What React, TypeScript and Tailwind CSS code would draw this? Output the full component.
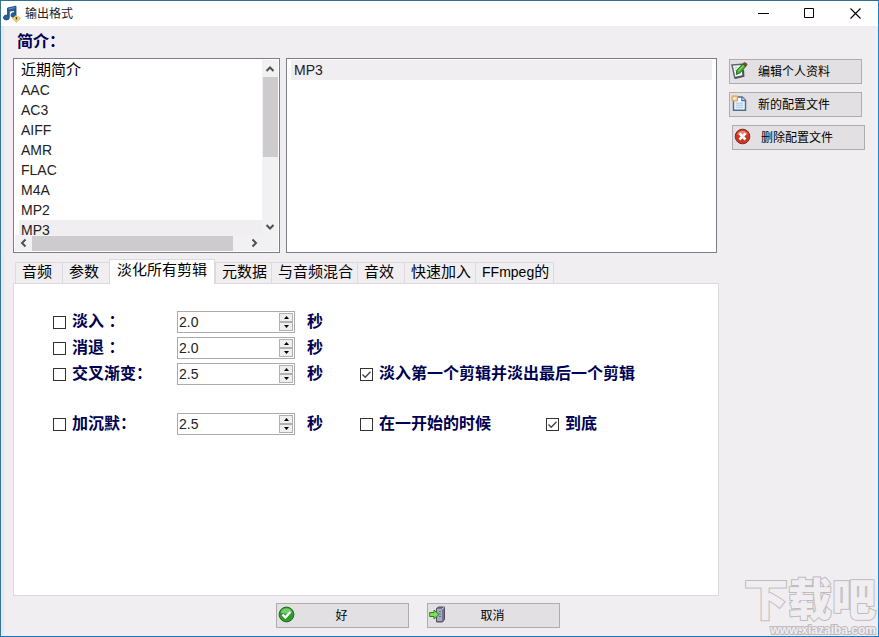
import React, { useState } from 'react';

const FORMATS = ['近期简介', 'AAC', 'AC3', 'AIFF', 'AMR', 'FLAC', 'M4A', 'MP2', 'MP3'];
const TABS = ['音频', '参数', '淡化所有剪辑', '元数据', '与音频混合', '音效', '快速加入', 'FFmpeg的'];

const MusicIcon = () => (
    <svg width="18" height="18" viewBox="0 0 18 18" aria-hidden="true">
        <path d="M4.500 3 13 1.200V10a2.500 2.300 0 1 1-1.700-2.100V5.200l-5 1.100v6.200a2.900 2.400 0 1 1-1.800-2.200z" fill="#22609e" stroke="#18406c" strokeWidth=".8" />
        <path d="M5.500 4 12.200 2.600" stroke="#5b97d0" strokeWidth="1" />
        <path d="m13.300 10.200 4.200 3.200-4.200 4-4-4z" fill="#ecd87c" stroke="#c9b05c" strokeWidth=".7" />
        <path d="M13.400 12v2.600" stroke="#5e4e1e" strokeWidth="1.400" />
    </svg>
);

const EditIcon = () => (
    <svg width="17" height="17" viewBox="0 0 17 17" aria-hidden="true">
        <path d="m1 3 9.500-.8 1.800 11.600-8.500 2z" fill="#f4f7f6" stroke="#5c666e" strokeWidth="1.500" />
        <path d="m12.300 8 .3 6.200-8.600 1.900" fill="none" stroke="#4b545b" strokeWidth="1.600" />
        <path d="m3.500 6 3-.3M4 8.300l2-.2" stroke="#b3bac2" strokeWidth="1" />
        <path d="m5.300 12.500.5-4.200L11.800 1.800l3 2.600-6 6.700z" fill="#43b32c" stroke="#256b1a" strokeWidth="1" />
        <path d="M7.500 9 13 3.200" stroke="#a2e58a" strokeWidth="1" />
        <path d="m11.700 2 1.400-1.300q2-.4 3 1.700l-1.300 2z" fill="#8c4a3c" stroke="#5b2a22" strokeWidth=".7" />
    </svg>
);

const NewIcon = () => (
    <svg width="17" height="17" viewBox="0 0 17 17" aria-hidden="true">
        <path d="M2.500 2h8.700l3.300 3.300v10H2.500z" fill="#f6faff" stroke="#4c6c94" strokeWidth="1.500" />
        <path d="M10.800 2v3.600h3.700" fill="#c6daf0" stroke="#4c6c94" strokeWidth="1.100" />
        <path d="M4.700 7.500h7.600v5.800H4.700z" fill="#b5d0ef" />
        <path d="M4.700 9.300h7.600M4.700 11.500h7.600" stroke="#e2eefb" strokeWidth=".8" />
        <path d="M1 1h5.500v5H1z" fill="#f5c894" stroke="#de9c55" strokeWidth="1" />
        <path d="M3.700 2v3M2.200 3.500h3" stroke="#fff5dd" strokeWidth="1" />
    </svg>
);

const DeleteIcon = () => (
    <svg width="17" height="17" viewBox="0 0 17 17" aria-hidden="true">
        <circle cx="8.500" cy="8.500" r="7.300" fill="#cc3424" stroke="#84261e" strokeWidth="1" />
        <path d="M3 6.300a6 6 0 0 1 11 0q-5.500 2-11 0z" fill="#e98272" />
        <path d="m5.500 5.500 6 6m0-6-6 6" stroke="#fff" strokeWidth="2.500" />
    </svg>
);

const OkIcon = () => (
    <svg width="17" height="17" viewBox="0 0 17 17" aria-hidden="true">
        <circle cx="8.500" cy="8.500" r="7.400" fill="#2f9a2c" stroke="#1f6b20" strokeWidth="1" />
        <path d="M2.800 6.500a6 6 0 0 1 11.400 0q-5.700 2.500-11.400 0z" fill="#79c970" />
        <path d="m4.500 8.500 2.800 3 5-5.500" fill="none" stroke="#fff" strokeWidth="2.400" />
    </svg>
);

const CancelIcon = () => (
    <svg width="17" height="17" viewBox="0 0 17 17" aria-hidden="true">
        <path d="M7.500 2.500 9.500 1h6v12.500L13.500 16h-6z" fill="#73738c" stroke="#4d4d63" strokeWidth="1" />
        <path d="M8 3h5v12H8z" fill="#a9a9bf" />
        <path d="M13 3 15.300 1.300" stroke="#d5d5e2" strokeWidth="1" />
        <path d="M10 5.500h2M10 8h2M10 10.500h2" stroke="#6e6e86" strokeWidth="1" />
        <path d="M.700 6.500H5V4l5 4.500L5 13v-2.500H.700z" fill="#7be05a" stroke="#2c7f1f" strokeWidth="1" />
    </svg>
);

interface ChevronProps {
    d: string;
}

const Chevron: React.FC<ChevronProps> = ({ d }) => (
    <svg width="10" height="10" viewBox="0 0 10 10" aria-hidden="true">
        <path d={d} fill="none" stroke="#505050" strokeWidth="2" />
    </svg>
);

interface ActionButtonProps {
    icon: React.ReactNode;
    label: string;
    centered?: boolean;
    onClick?: () => void;
}

const ActionButton: React.FC<ActionButtonProps> = ({ icon, label, centered, onClick }) => (
    <button
        type="button"
        onClick={onClick}
        className="flex h-[25px] w-[133px] shrink-0 items-center border border-[#adadad] bg-[#e2e0e2] pl-px text-xs text-black hover:bg-[#e5f1fb]"
    >
        <span className="pb-[2px]">{icon}</span>
        <span className={centered ? 'flex-1 pr-5 text-center' : 'pl-[10px]'}>{label}</span>
    </button>
);

interface CheckFieldProps {
    label: string;
    defaultChecked?: boolean;
    className?: string;
}

const CheckField: React.FC<CheckFieldProps> = ({ label, defaultChecked, className }) => (
    <label className={`flex items-center whitespace-pre text-base font-bold text-[#000050] ${className ?? ''}`}>
        <span className="relative mr-[6px] size-[13px]">
            <input type="checkbox" defaultChecked={defaultChecked} className="peer block size-[13px] appearance-none border border-[#333] bg-white" />
            <svg className="pointer-events-none absolute inset-0 hidden peer-checked:block" width="13" height="13" viewBox="0 0 13 13" aria-hidden="true">
                <path d="m2.500 6.500 2.700 2.800 5.300-5.600" fill="none" stroke="#444" strokeWidth="1.300" />
            </svg>
        </span>
        {label}
    </label>
);

interface SpinRowProps {
    label: string;
    initial: number;
    children?: React.ReactNode;
}

const SpinRow: React.FC<SpinRowProps> = ({ label, initial, children }) => {
    const [value, setValue] = useState(initial.toFixed(1));
    const step = (delta: number) => setValue((v) => Math.max(0, (parseFloat(v) || 0) + delta).toFixed(1));

    return (
        <div className="flex h-[22px] items-center">
            <CheckField label={label} className="w-[124px]" />
            <div className="flex h-[22px] w-[118px] items-center border border-[#ababab] bg-white pr-px">
                <input
                    type="text"
                    aria-label={label}
                    value={value}
                    onChange={(e) => setValue(e.target.value)}
                    className="min-w-0 flex-1 pl-px text-sm text-[#222] outline-none"
                />
                <div className="flex flex-col">
                    <button type="button" aria-label="增加" onClick={() => step(0.1)} className="flex h-[9px] w-[14px] items-center justify-center border border-[#b0b0b0] bg-[#efefef]">
                        <svg width="5" height="3" viewBox="0 0 5 3"><path d="M0 3h5L2.500 0z" fill="#000" /></svg>
                    </button>
                    <button type="button" aria-label="减少" onClick={() => step(-0.1)} className="flex h-[9px] w-[14px] items-center justify-center border border-[#b0b0b0] bg-[#efefef]">
                        <svg width="5" height="3" viewBox="0 0 5 3"><path d="M0 0h5L2.500 3z" fill="#000" /></svg>
                    </button>
                </div>
            </div>
            <span className="ml-3 w-[53px] text-base font-bold text-[#000050]">秒</span>
            {children}
        </div>
    );
};

const App: React.FC = () => {
    const [format, setFormat] = useState('MP3');
    const [tab, setTab] = useState('淡化所有剪辑');

    return (
        <div className="relative flex min-h-screen flex-col overflow-hidden border border-t-[#2d7291] border-r-[#1883d7] border-b-[#2272b0] border-l-[#3b7390] bg-[#f0eef1] font-['Liberation_Sans','Noto_Sans_CJK_SC',sans-serif]">
            {/* Title bar */}
            <header className="flex h-[25px] items-center bg-white pl-[2px]">
                <MusicIcon />
                <h1 className="ml-1 flex-1 text-xs text-[#222]">输出格式</h1>
                <button type="button" aria-label="最小化" className="flex h-full w-[46px] items-center justify-center">
                    <svg width="11" height="11" viewBox="0 0 11 11"><path d="M0 5.500h11" stroke="#000" /></svg>
                </button>
                <button type="button" aria-label="最大化" className="flex h-full w-[46px] items-center justify-center">
                    <svg width="11" height="11" viewBox="0 0 11 11"><path d="M.5.5h9v9h-9z" fill="none" stroke="#000" /></svg>
                </button>
                <button type="button" aria-label="关闭" className="flex h-full w-[46px] items-center justify-center">
                    <svg width="11" height="11" viewBox="0 0 11 11"><path d="m.5.500 10 10m0-10-10 10" stroke="#000" strokeWidth="1.100" /></svg>
                </button>
            </header>

            <div className="flex flex-1 flex-col border-l-3 border-[#dcebf7] pr-[13px] pl-[9px]">
                <h2 className="h-8 pl-1 text-base leading-8 font-bold text-[#000050]">简介：</h2>

                <div className="flex flex-1 gap-[10px]">
                    <main className="flex min-w-0 flex-1 flex-col">
                        <div className="flex h-[195px] gap-[6px] pr-[2px]">
                            {/* Format list */}
                            <div className="flex w-[267px] flex-col border border-[#7c7e86] bg-white p-px">
                                <div className="flex min-h-0 flex-1">
                                    <ul role="listbox" aria-label="简介" className="flex-1 overflow-hidden pl-1 text-sm text-[#222]">
                                        {FORMATS.map((f) => (
                                            <li
                                                key={f}
                                                role="option"
                                                aria-selected={f === format}
                                                onClick={() => setFormat(f)}
                                                className={`h-5 pl-[2px] leading-5 ${f === '近期简介' ? 'text-[15px] text-black' : ''} ${f === format ? 'bg-[#f0eef1]' : ''}`}
                                            >
                                                {f}
                                            </li>
                                        ))}
                                    </ul>
                                    <div className="flex w-4 flex-col items-center bg-[#f1f0f2]">
                                        <button type="button" aria-label="向上滚动" className="flex h-[17px] items-center"><Chevron d="M1.500 7 5 3.500 8.500 7" /></button>
                                        <div className="h-20 w-[15px] bg-[#cdcbce]" />
                                        <button type="button" aria-label="向下滚动" className="mt-auto flex h-[17px] items-center"><Chevron d="M1.500 3 5 6.500 8.500 3" /></button>
                                    </div>
                                </div>
                                <div className="flex h-4 items-center bg-[#f1f0f2] pr-4">
                                    <button type="button" aria-label="向左滚动" className="flex w-[17px] justify-center"><Chevron d="M6.500 1.500 3 5l3.500 3.500" /></button>
                                    <div className="h-[15px] w-[201px] bg-[#cdcbce]" />
                                    <button type="button" aria-label="向右滚动" className="ml-auto flex w-[17px] justify-center"><Chevron d="M3.500 1.500 7 5 3.500 8.500" /></button>
                                </div>
                            </div>

                            {/* Profiles of the chosen format */}
                            <ul role="listbox" aria-label="配置文件" className="flex-1 border border-[#7c7e86] bg-white px-1 py-px text-sm text-[#222]">
                                <li role="option" aria-selected="true" className="h-5 bg-[#f0eef1] pl-[3px] leading-5">{format}</li>
                            </ul>
                        </div>

                        <div role="tablist" className="mt-[6px] flex h-6 items-end pl-[2px]">
                            {TABS.map((t) => (
                                <button
                                    key={t}
                                    type="button"
                                    role="tab"
                                    aria-selected={t === tab}
                                    onClick={() => setTab(t)}
                                    className={
                                        t === tab
                                            ? 'relative -mb-px h-[25px] border-x border-t border-[#dcdadd] bg-white px-[7px] pb-1 text-[15px] leading-5 whitespace-nowrap text-black'
                                            : 'h-[21px] min-w-[47px] border-t border-l border-[#dcdadd] pr-1 pb-[2px] pl-[6px] text-left text-[15px] leading-[18px] whitespace-nowrap text-black last:border-r'
                                    }
                                >
                                    {t === 'FFmpeg的' ? <><span className="text-sm leading-[18px]">FFmpeg</span>的</> : t}
                                </button>
                            ))}
                        </div>

                        <section role="tabpanel" className="flex flex-1 flex-col gap-1 border border-[#dcdadd] bg-white pt-[27px] pb-6 pl-[39px]">
                            <SpinRow label="淡入 ：" initial={2} />
                            <SpinRow label="消退 ：" initial={2} />
                            <SpinRow label="交叉渐变：" initial={2.5}>
                                <CheckField label="淡入第一个剪辑并淡出最后一个剪辑" defaultChecked />
                            </SpinRow>
                            <div className="mt-6">
                                <SpinRow label="加沉默：" initial={2.5}>
                                    <CheckField label="在一开始的时候" className="w-[186px]" />
                                    <CheckField label="到底" defaultChecked />
                                </SpinRow>
                            </div>
                        </section>
                    </main>

                    <aside className="flex w-[136px] flex-col gap-2 pt-px">
                        <ActionButton icon={<EditIcon />} label="编辑个人资料" />
                        <ActionButton icon={<NewIcon />} label="新的配置文件" />
                        <div className="flex justify-end">
                            <ActionButton icon={<DeleteIcon />} label="删除配置文件" />
                        </div>
                    </aside>
                </div>

                <footer className="flex justify-center gap-[18px] pt-[7px] pr-[42px] pb-2">
                    <ActionButton icon={<OkIcon />} label="好" centered />
                    <ActionButton icon={<CancelIcon />} label="取消" centered />
                </footer>
            </div>

            {/* Site mark */}
            <div className="pointer-events-none absolute right-0 bottom-0 flex w-[134px] flex-col font-black text-[#f0eef1] [paint-order:stroke_fill]">
                <div className="h-[46px] text-[44px] leading-[46px] whitespace-nowrap [-webkit-text-stroke:2px_#bdbbbf]">下载吧</div>
                <div className="h-3 pr-[2px] text-right text-xs leading-3 [-webkit-text-stroke:2px_#bdbbbf]">www.xiazaiba.com</div>
            </div>
        </div>
    );
};

export default App;
